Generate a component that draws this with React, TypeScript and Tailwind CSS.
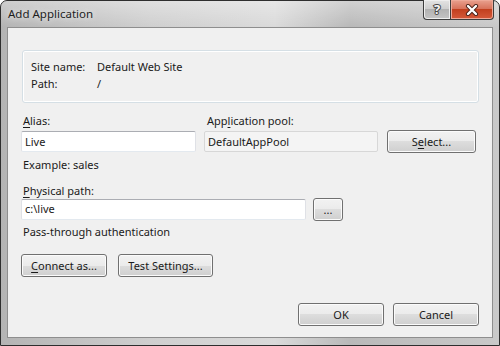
import React from "react";

const font = { fontFamily: '"Noto Sans", "Open Sans", sans-serif' };

const btn =
  "h-[23px] rounded-[3px] border border-[#707070] bg-[linear-gradient(#f2f2f2_0%,#ebebeb_50%,#dddddd_50%,#cfcfcf_100%)] shadow-[inset_0_0_0_1px_#fbfbfb] text-[11px] leading-none text-[#1a1a1a] flex items-center justify-center";

const input =
  "h-[21px] rounded-[2px] border border-[#abadb3] border-l-[#dfe1e6] border-r-[#dfe1e6] border-b-[#e3e9ef] bg-white px-[3px] flex items-center text-[11px] text-[#1a1a1a]";

function TitleButtons() {
  return (
    <div className="flex mt-[-1px] h-[20px]">
      <div className="w-[27px] h-full rounded-bl-[4px] border border-t-0 border-r-0 border-[#3d3d3d] bg-[linear-gradient(#e4e4e4_0%,#cfcfcf_45%,#b2b2b2_50%,#c4c4c4_100%)] shadow-[inset_0_0_0_1px_#eeeeee] flex items-center justify-center">
        <span
          className="text-[13px] font-bold leading-none text-[#f6f6f6]"
          style={{ WebkitTextStroke: "2px #4a4a4a", paintOrder: "stroke fill" }}
        >
          ?
        </span>
      </div>
      <div className="w-[44px] h-full rounded-br-[4px] border border-t-0 border-[#3d3d3d] bg-[linear-gradient(#e9a18f_0%,#d8735c_45%,#c2401f_50%,#d5593a_100%)] shadow-[inset_0_0_0_1px_#eea998] flex items-center justify-center">
        <svg width="14" height="12" viewBox="0 0 14 12">
          <path d="M3 2 L11 10 M11 2 L3 10" stroke="#4a2018" strokeWidth="4.2" strokeLinecap="round" />
          <path d="M3 2 L11 10 M11 2 L3 10" stroke="#ffffff" strokeWidth="2.4" strokeLinecap="round" />
        </svg>
      </div>
    </div>
  );
}

function U({ children }: { children: React.ReactNode }) {
  return (
    <span className="underline underline-offset-[2px] decoration-[1px]">{children}</span>
  );
}

export default function App() {
  return (
    <div style={font} className="w-[500px] h-[346px] bg-white">
      <div className="w-[500px] h-[346px] rounded-t-[7px] border border-[#2e2e2e] bg-[linear-gradient(90deg,#b4b4b4_0%,#cfcfcf_30%,#dadada_55%,#b9b9b9_70%,#c9c9c9_100%)] flex flex-col">
        <div className="h-[26px] flex justify-between items-start bg-[linear-gradient(rgba(255,255,255,0.35),rgba(255,255,255,0))] rounded-t-[6px]">
          <span
            className="pl-[7px] pt-[5px] text-[11.5px] leading-[16px] text-[#1e1e1e]"
            style={{ textShadow: "0 0 6px rgba(255,255,255,0.9)" }}
          >
            Add Application
          </span>
          <div className="mr-[5px]">
            <TitleButtons />
          </div>
        </div>

        <div className="flex-1 mx-[6px] mb-[7px] border border-[#8e8e8e] bg-[#f0f0f0] px-[13px] flex flex-col text-[11px] text-[#1a1a1a]">
          <div className="mt-[22px] ml-px h-[53px] rounded-[3px] border border-[#d5dfe5] shadow-[inset_0_0_0_1px_#ffffff] pl-[8px] pt-[7px] leading-[17px]">
            <div className="flex">
              <span className="w-[66px]">Site name:</span>
              <span>Default Web Site</span>
            </div>
            <div className="flex">
              <span className="w-[66px]">Path:</span>
              <span>/</span>
            </div>
          </div>

          <div className="mt-[10px] grid grid-cols-[175px_174px_90px] gap-x-[8px] leading-[15px]">
            <span className="pl-[2px]">
              <U>A</U>lias:
            </span>
            <span className="pl-[3px]">
              App<U>l</U>ication pool:
            </span>
            <span />
            <div className={`${input} mt-[3px]`}>Live</div>
            <div className="mt-[3px] h-[21px] rounded-[2px] border border-[#d7d7d7] bg-[#f4f4f4] px-[3px] flex items-center text-[#1a1a1a]">
              DefaultAppPool
            </div>
            <div className={`${btn} mt-[2px] ml-px`}>
              S<U>e</U>lect...
            </div>
          </div>

          <span className="mt-[4px] pl-[2px] leading-[15px]">Example: sales</span>

          <span className="mt-[11px] pl-[2px] leading-[15px]">
            <U>P</U>hysical path:
          </span>
          <div className="flex items-center gap-[7px]">
            <div className={`${input} w-[285px]`}>c:\live</div>
            <div className={`${btn} w-[30px] text-[10px]`}>...</div>
          </div>

          <span className="mt-[3px] pl-[2px] leading-[15px]">Pass-through authentication</span>

          <div className="mt-[15px] flex gap-[11px]">
            <div className={`${btn} w-[86px]`}>
              <U>C</U>onnect as...
            </div>
            <div className={`${btn} w-[95px]`}>Test Settings...</div>
          </div>

          <div className="flex-1" />

          <div className="mb-[11px] flex justify-end gap-[9px]">
            <div className={`${btn} w-[86px] border-[#3c8cc0] shadow-[inset_0_0_0_1px_#9ee1f7]`}>OK</div>
            <div className={`${btn} w-[86px]`}>Cancel</div>
          </div>
        </div>
      </div>
    </div>
  );
}
